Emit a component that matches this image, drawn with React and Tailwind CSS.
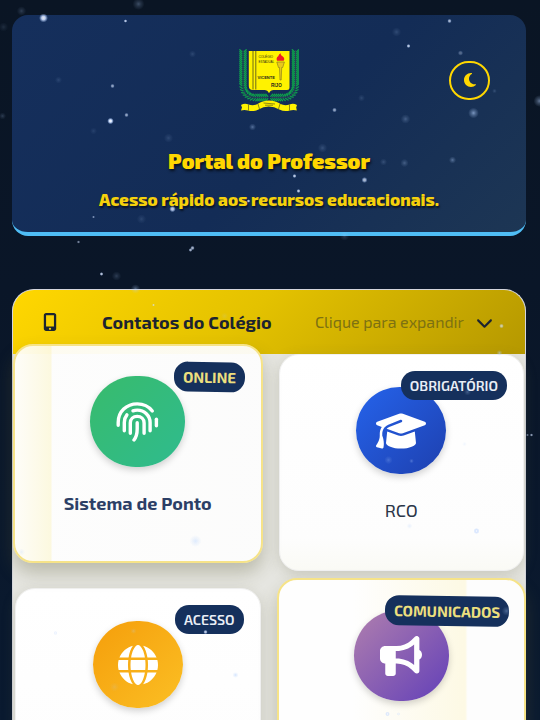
import {
  FaBullhorn,
  FaChevronDown,
  FaGlobe,
  FaGraduationCap,
  FaMobileScreenButton,
  FaMoon,
} from 'react-icons/fa6';

// x, y, radius, opacity, blurred
const STARS = [
  [43, 18, 3, 0.9, 0], [21, 11, 4, 0.25, 1], [138, 4, 5, 0.35, 1], [125, 21, 1.2, 0.8, 0],
  [3, 27, 4, 0.15, 1], [2, 116, 3, 0.25, 1], [192, 54, 3, 0.2, 1], [58, 80, 3, 0.18, 1],
  [112, 86, 1.5, 0.6, 0], [110, 121, 2.2, 1, 0], [126, 115, 1.5, 0.6, 0], [93, 131, 3, 0.15, 1],
  [168, 138, 4, 0.2, 1], [252, 127, 3, 0.5, 1], [172, 209, 2.2, 0.8, 0], [248, 201, 1.2, 0.8, 0],
  [93, 217, 1, 0.5, 0], [141, 219, 4, 0.18, 1], [78, 242, 1.1, 0.5, 0], [192, 248, 1.5, 0.7, 0],
  [190, 250, 1.3, 0.7, 0], [101, 274, 1.3, 0.8, 0], [116, 276, 4, 0.25, 1], [135, 289, 4, 0.5, 1],
  [153, 305, 1, 0.6, 0], [224, 316, 3, 0.2, 1], [449, 21, 1.5, 0.7, 0], [396, 32, 4, 0.22, 1],
  [408, 46, 1.4, 0.8, 0], [460, 53, 1.8, 0.3, 0], [494, 91, 2, 0.25, 1], [539, 101, 5, 0.6, 1],
  [473, 113, 4.5, 0.75, 1], [334, 110, 1.6, 0.6, 0], [361, 98, 3, 0.2, 1], [405, 119, 4, 0.35, 1],
  [322, 148, 4, 0.25, 1], [383, 162, 3, 0.25, 1], [404, 163, 3.5, 0.35, 1], [452, 160, 3, 0.5, 1],
  [294, 176, 1.4, 0.8, 0], [298, 191, 1.4, 0.8, 0], [364, 180, 2, 0.7, 0], [344, 236, 4, 0.25, 1],
  [501, 326, 1.6, 0.6, 0], [499, 353, 2.5, 0.7, 1], [531, 435, 1.1, 0.6, 0], [527, 435, 1, 0.4, 0],
  [467, 392, 3, 0.35, 1], [388, 460, 3.5, 0.3, 1], [411, 461, 2, 0.4, 1], [476, 531, 2, 0.8, 0],
  [409, 526, 2.5, 0.35, 1], [464, 444, 2, 0.25, 1], [195, 541, 5, 0.5, 1], [21, 552, 3, 0.3, 1],
  [55, 633, 1.4, 0.4, 0], [205, 632, 1.5, 0.8, 0], [235, 675, 2.5, 0.7, 1], [133, 631, 2.5, 0.3, 1],
  [387, 714, 1.6, 0.7, 0], [398, 714, 1.2, 0.4, 0], [506, 611, 4, 0.4, 1], [114, 687, 4, 0.2, 1],
];

function Stars() {
  return (
    <svg className="pointer-events-none fixed inset-0 z-50" width="540" height="720" viewBox="0 0 540 720" aria-hidden="true">
      <defs>
        <radialGradient id="soft">
          <stop offset="0" stopColor="#b4d2ff" />
          <stop offset="0.4" stopColor="#b4d2ff" stopOpacity="0.5" />
          <stop offset="1" stopColor="#b4d2ff" stopOpacity="0" />
        </radialGradient>
        <radialGradient id="sharp">
          <stop offset="0" stopColor="#fff" />
          <stop offset="0.4" stopColor="#cfe0ff" />
          <stop offset="1" stopColor="#a9c8ff" stopOpacity="0" />
        </radialGradient>
      </defs>
      {STARS.map(([x, y, r, o, soft]) => (
        <circle key={`${x}-${y}`} cx={x + 0.5} cy={y} r={soft ? r * 1.2 : r * 1.5} opacity={soft ? o * 0.85 : o} fill={soft ? 'url(#soft)' : 'url(#sharp)'} />
      ))}
    </svg>
  );
}

// Points along one laurel branch: down the side, round the corner, in to the middle.
function branch() {
  const pts = [];
  for (let y = 2; y < 36; y += 2) pts.push([3.5, y, 90]);
  for (let a = 0; a <= 90; a += 11) {
    const t = (a * Math.PI) / 180;
    pts.push([15.5 - 12 * Math.cos(t), 36 + 12.5 * Math.sin(t), 90 - a]);
  }
  for (let x = 17.5; x < 28; x += 2) pts.push([x, 48.5, 0]);
  return pts;
}

function Laurel() {
  return (
    <g>
      {branch().map(([x, y, deg]) => (
        <g key={`${x}-${y}`} transform={`translate(${x} ${y}) rotate(${deg})`} stroke="#0fa04c" strokeWidth="1.3" strokeLinecap="round">
          <path d="M0.8 -1.100 L-1.200 -3.200 M0.8 1.100 L-1.200 3.200" />
        </g>
      ))}
      <path d="M3.5 1 V36 Q3.5 48.5 16 48.5 H28" fill="none" stroke="#3c4a5a" strokeWidth="0.6" />
    </g>
  );
}

function Crest() {
  return (
    <svg width="60" height="66" viewBox="-0.5 -2 60 66" role="img" aria-label="Colégio Estadual Vicente Rijo">
      <Laurel />
      <g transform="translate(59.5 0) scale(-1 1)">
        <Laurel />
      </g>
      <path d="M9.3 2H50v36.500q0 2.500-2.500 2.500H34q-3 0-4.500 3.200Q28 41 25 41H12.500q-3.200-.5-3.200-4Z" fill="#fff200" />
      <path d="M13.500 2v38.500M16.300 2v38.500" stroke="#4a4a20" strokeWidth="0.8" />
      <path d="M37.500 11.800q-1.200-3 1.200-4.500Q39.500 5 41.200 4.300q-.4 2 1.800 3 2.800 2 1.200 4.500Z" fill="#ed1c24" />
      <path d="M37.300 13h7.600l-1.700 5.500h-1l-.5 12.500h-1.200l-.5-12.500h-1Z" fill="#e8c81c" stroke="#7d7420" strokeWidth="0.6" />
      <g fontFamily='"Liberation Sans", sans-serif' fill="#1d1d1b">
        <text x="19" y="8.500" fontSize="3.200">COLÉGIO</text>
        <text x="19" y="13.500" fontSize="3">ESTADUAL</text>
        <text x="18" y="30.300" fontSize="4" fontWeight="700">VICENTE</text>
        <text x="31.500" y="38" fontSize="4.600" fontWeight="700">RIJO</text>
      </g>
      <path
        d="M1.500 56Q5 54 9 55.500q5 1.500 9-.5 5-3.500 11.500-3.500T41 55q4 2 9 .5 4-1.500 7.500.5l-.8 2.500.6 3q-3.500-1.200-7 .1-5.500 1.400-10.500-1.100-5-3-10.500-3T19 60.500q-5 2.500-10.500 1.100-3.500-1.300-7-.1l1-3Z"
        fill="#fff200"
      />
      <path d="M9 55.500v6M18.500 55l1.500 5M40.500 55l-1.500 5M50 55.500v6M24 54l11.500 1M25.500 56.200h8" stroke="#5c5a1a" strokeWidth="0.7" />
    </svg>
  );
}

function Fingerprint(props) {
  return (
    <svg viewBox="0 0 43 40" fill="none" stroke="currentColor" strokeWidth="3.4" strokeLinecap="round" {...props}>
      <path d="M2.2 23.300V20.500C2.200 9.500 10.500 1.900 21.300 1.900c6.200 0 11.500 2.700 15 7.100" />
      <path d="M8.300 28.800v-8.300c0-2.900.9-5.500 2.600-7.600" />
      <path d="M17 8.800c1.300-.5 2.800-.7 4.300-.7 7 0 12.800 5.400 12.800 12.400v8.300" />
      <path d="M14.300 31.200V21c0-3.800 3-6.600 6.900-6.600s6.900 2.800 6.900 6.600v10.200" />
      <path d="M21.200 20.800v6.200c0 4.400-.9 8-3.200 11" />
      <path d="M40.400 17.300v6.500" />
    </svg>
  );
}

const CARDS = [
  {
    title: 'Sistema de Ponto',
    badge: 'ONLINE',
    Icon: Fingerprint,
    iconSize: 'h-10 w-[43px]',
    circle: 'bg-[linear-gradient(135deg,#38bb6c,#2fbb8e)]',
    tint: 'bg-[linear-gradient(90deg,#fffefaf2_0,#fdf9dff5_36px,#fefefef2_37px,#fdfdfdf2_100%)]',
    raised: true,
  },
  {
    title: 'RCO',
    badge: 'OBRIGATÓRIO',
    Icon: FaGraduationCap,
    iconSize: 'h-10 w-[50px]',
    circle: 'bg-[linear-gradient(135deg,#2563eb,#1e40af)]',
  },
  {
    badge: 'ACESSO',
    label: 'Acesso',
    Icon: FaGlobe,
    iconSize: 'h-10 w-10',
    circle: 'bg-[linear-gradient(135deg,#f59e0b,#fbbf24)]',
  },
  {
    badge: 'COMUNICADOS',
    label: 'Comunicados',
    Icon: FaBullhorn,
    iconSize: 'h-10 w-[42px]',
    circle: 'bg-[linear-gradient(135deg,#b07fae,#6340b8)]',
    tint: 'bg-[linear-gradient(90deg,#fefefe_0,#fefefe_30%,#fdf9e4_76%,#fdfdfd_77%,#fdfdfd_100%)]',
    raised: true,
  },
];

function Card({ title, badge, label, Icon, iconSize, circle, tint, raised }) {
  const shell = raised
    ? `z-10 -mx-[2px] -mt-[10px] mb-2 border-2 border-[#f6e388] pt-[30px] shadow-[0_10px_18px_rgba(90,90,50,0.3)] ${tint}`
    : 'border border-[#f1f1f1] bg-[linear-gradient(180deg,#ffffff_0,#fdfdfd_85%,#fafaf5_100%)] pt-[32px] shadow-[0_4px_14px_rgba(100,100,70,0.22)]';
  return (
    <a href="#" aria-label={label} className={`relative flex min-h-[217px] flex-col items-center rounded-[20px] ${shell}`}>
      <span
        className={`flex items-center justify-center rounded-full text-white shadow-[0_3px_7px_rgba(0,0,0,0.18)] ${circle} ${
          raised ? 'h-[91px] w-[95px]' : 'h-[87px] w-[90px]'
        }`}
      >
        <Icon className={iconSize} preserveAspectRatio="none" aria-hidden="true" />
      </span>
      {title && (
        <span className={`mt-6 text-[18px] leading-6 ${raised ? 'font-bold text-[#2c3f66]' : 'text-[#2b3648]'}`}>
          {title}
        </span>
      )}
      <span
        className={`absolute top-4 rounded-[14px] bg-[#15305c] px-[9px] ${
          raised ? 'right-[15px] rotate-1 text-[15px] leading-[30px] font-bold text-[#ecdf7e]' : 'right-4 text-[14px] leading-[29px] font-semibold text-[#e9eef6]'
        }`}
      >
        {badge}
      </span>
    </a>
  );
}

export default function App() {
  return (
    <div className="h-screen overflow-hidden bg-[linear-gradient(180deg,#0a1524_0,#0a1628_40%,#0a1a30_100%)] pt-[15px] pr-[14px] pl-3 font-['Exo_2','Open_Sans','Noto_Sans',sans-serif]">
      <Stars />
      <header className="flex flex-col items-center rounded-2xl border-b-4 border-[#4fbdf5] bg-[linear-gradient(135deg,#152f5c_0,#132c56_55%,#1d3654_100%)] px-9 pt-8 pb-[19px] text-center text-[#ffd700]">
        <div className="grid w-full grid-cols-[1fr_auto_1fr] items-center">
          <span />
          <Crest />
          <button
            type="button"
            aria-label="Alternar tema"
            className="flex h-[39px] w-[41px] items-center justify-center justify-self-end rounded-full border-2 border-[#ffd700] text-[16px]"
          >
            <FaMoon aria-hidden="true" />
          </button>
        </div>
        <h1 className="mt-8 text-[21px] leading-8 font-black [text-shadow:1px_2px_3px_rgba(0,0,0,0.7)]">Portal do Professor</h1>
        <p className="mt-2 text-[17px] leading-7 font-extrabold text-[#f5d10c] [text-shadow:1px_2px_2px_rgba(0,0,0,0.6)]">
          Acesso rápido aos recursos educacionais.
        </p>
      </header>

      <main className="mt-[53px] rounded-t-[22px] border border-b-0 border-[#d5d6dc] bg-[#e6e6e1] pb-8">
        <button
          type="button"
          aria-expanded="false"
          className="flex h-16 w-full items-center rounded-t-[21px] bg-[linear-gradient(135deg,#ffd700_0,#e4c200_45%,#b59800_100%)] pr-8 pl-[30px] text-[#1c2430]"
        >
          <FaMobileScreenButton className="h-[18px] w-[14px]" aria-hidden="true" />
          <span className="ml-[45px] text-[18px] font-bold">Contatos do Colégio</span>
          <span className="ml-auto text-[16px] text-[#7d7112]">Clique para expandir</span>
          <FaChevronDown className="ml-3 text-[17px]" aria-hidden="true" />
        </button>
        <div className="grid grid-cols-2 gap-x-[18px] gap-y-[17px] pr-px pl-[2px]">
          {CARDS.map((card) => (
            <Card key={card.badge} {...card} />
          ))}
        </div>
      </main>
    </div>
  );
}
